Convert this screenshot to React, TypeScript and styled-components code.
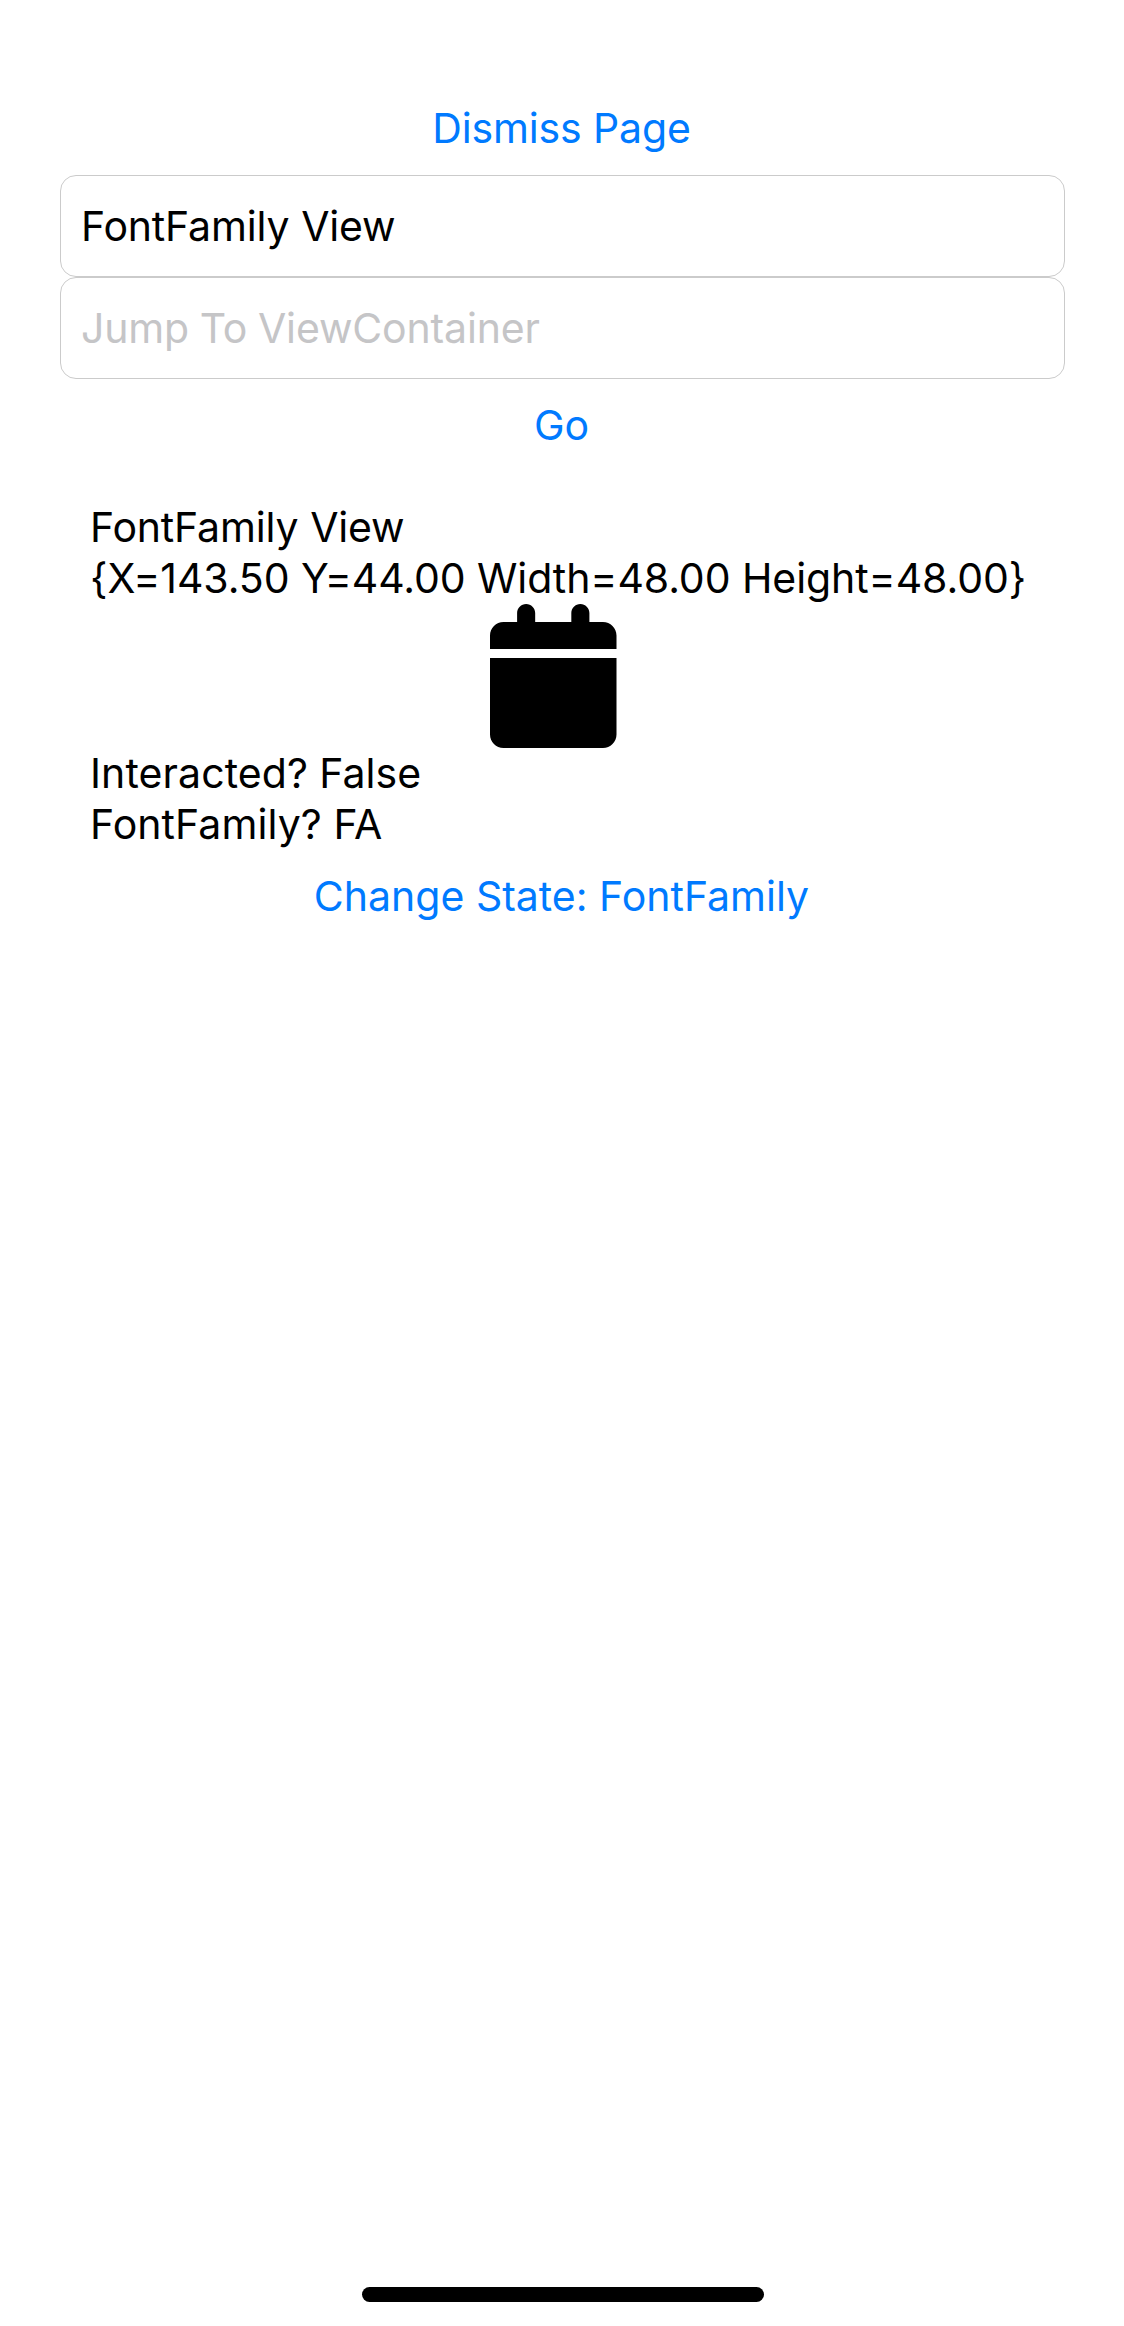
import React, { useState } from "react";
import styled, { createGlobalStyle } from "styled-components";

const GlobalStyle = createGlobalStyle`
  body {
    margin: 0;
    background: #fff;
  }
`;

const Screen = styled.main`
  box-sizing: border-box;
  display: flex;
  flex-direction: column;
  width: 100%;
  min-height: 100vh;
  padding: 82px 59px 24px 60px;
  background: #fff;
  color: #000;
  font: 400 41px/51px Inter, "Liberation Sans", sans-serif;
`;

const LinkButton = styled.button<{ $letter?: number }>`
  align-self: center;
  margin: 0 2px 0 0;
  padding: 21px 0;
  border: 0;
  background: none;
  color: #007aff;
  font: inherit;
  letter-spacing: ${(p) => p.$letter ?? 0}px;
  cursor: pointer;
`;

const Field = styled.input`
  box-sizing: border-box;
  width: 100%;
  height: 102px;
  padding: 0 20px;
  border: 1px solid #cbcbcb;
  border-radius: 16px;
  outline: none;
  background: #fff;
  color: #000;
  font: inherit;
  letter-spacing: -0.18px;
  word-spacing: 0.6px;

  &::placeholder {
    color: #c5c5c7;
    opacity: 1;
    letter-spacing: -0.15px;
    word-spacing: -0.7px;
  }
`;

const Details = styled.section`
  display: flex;
  flex-direction: column;
  padding: 30px 0 0 30px;
`;

const Line = styled.div<{ $letter?: number; $word?: number }>`
  height: 51px;
  white-space: nowrap;
  letter-spacing: ${(p) => p.$letter ?? 0}px;
  word-spacing: ${(p) => p.$word ?? 0}px;
`;

const Glyph = styled.svg`
  display: block;
  width: 126.5px;
  height: 144px;
  margin-left: 400px;
  fill: #000;
`;

const HomeIndicator = styled.div`
  align-self: center;
  width: 402px;
  height: 15px;
  margin-top: auto;
  border-radius: 8px;
  background: #000;
`;

function CalendarIcon() {
  return (
    <Glyph viewBox="0 0 448 512" preserveAspectRatio="none" aria-hidden="true">
      <path d="M96 32V64H48C21.5 64 0 85.5 0 112v48H448V112c0-26.5-21.5-48-48-48H352V32c0-17.7-14.3-32-32-32s-32 14.3-32 32V64H160V32c0-17.7-14.3-32-32-32S96 14.3 96 32zM448 192H0V464c0 26.5 21.5 48 48 48H400c26.5 0 48-21.5 48-48V192z" />
    </Glyph>
  );
}

export default function App() {
  const [view, setView] = useState("FontFamily View");
  const [target, setTarget] = useState("");

  return (
    <>
      <GlobalStyle />
      <Screen>
        <LinkButton $letter={-0.15}>Dismiss Page</LinkButton>
        <Field value={view} onChange={(e) => setView(e.target.value)} />
        <Field
          placeholder="Jump To ViewContainer"
          value={target}
          onChange={(e) => setTarget(e.target.value)}
        />
        <LinkButton>Go</LinkButton>
        <Details>
          <Line $letter={-0.18} $word={0.6}>FontFamily View</Line>
          <Line $letter={-0.07}>{"{X=143.50 Y=44.00 Width=48.00 Height=48.00}"}</Line>
          <CalendarIcon />
          <Line $letter={0.1} $word={-0.6}>Interacted? False</Line>
          <Line $letter={0.07}>FontFamily? FA</Line>
        </Details>
        <LinkButton>Change State: FontFamily</LinkButton>
        <HomeIndicator />
      </Screen>
    </>
  );
}
